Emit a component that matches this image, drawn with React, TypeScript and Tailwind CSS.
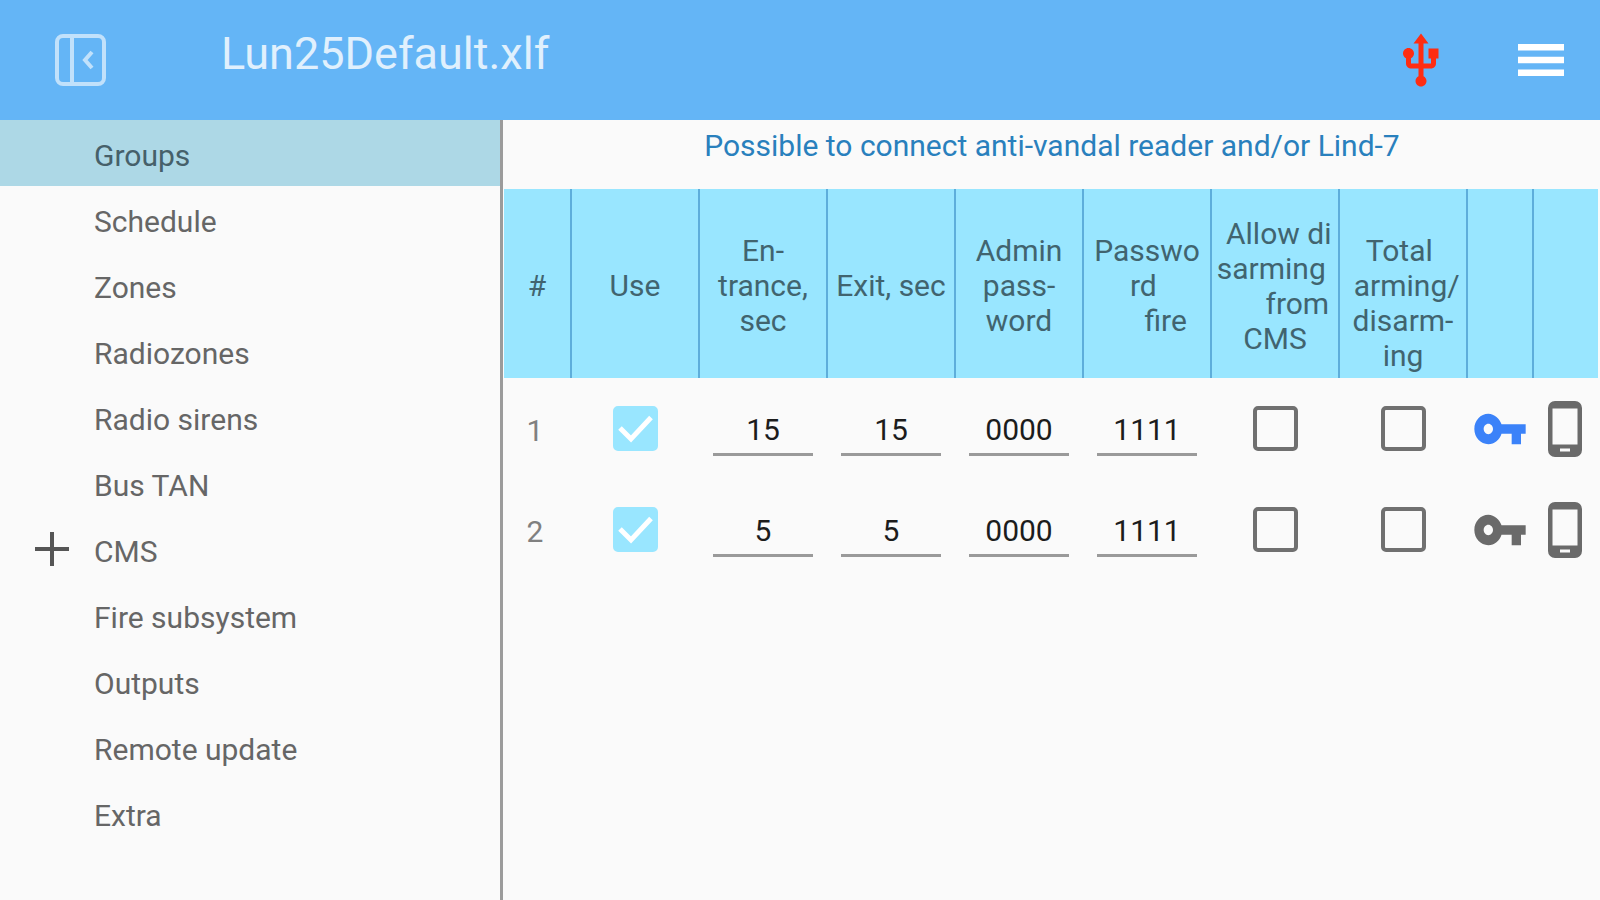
import { useState } from "react";
import type { ReactNode } from "react";

interface Group {
  id: number;
  use: boolean;
  entrance: string;
  exit: string;
  adminPassword: string;
  firePassword: string;
  allowDisarming: boolean;
  totalArming: boolean;
  keyActive: boolean;
}

const MENU = [
  { name: "Groups" },
  { name: "Schedule" },
  { name: "Zones" },
  { name: "Radiozones" },
  { name: "Radio sirens" },
  { name: "Bus TAN" },
  { name: "CMS", expandable: true },
  { name: "Fire subsystem" },
  { name: "Outputs" },
  { name: "Remote update" },
  { name: "Extra" },
];

// Captions keep their own line breaks and padding spaces
const COLUMNS = [
  { key: "num", caption: "#", width: "w-[68px]" },
  { key: "use", caption: "Use", width: "w-32" },
  { key: "entrance", caption: "En-\ntrance,\nsec", width: "w-32" },
  { key: "exit", caption: "Exit, sec", width: "w-32" },
  { key: "admin", caption: "Admin\npass-\nword", width: "w-32" },
  { key: "fire", caption: "Passwo\nrd \n     fire", width: "w-32" },
  { key: "disarm", caption: " Allow di\nsarming \n      from\nCMS", width: "w-32" },
  { key: "total", caption: " \nTotal \n arming/\ndisarm-\ning", width: "w-32" },
  { key: "key", caption: "", width: "w-[66px]" },
  { key: "phone", caption: "", width: "w-16" },
];

const INITIAL_GROUPS: Group[] = [
  { id: 1, use: true, entrance: "15", exit: "15", adminPassword: "0000", firePassword: "1111", allowDisarming: false, totalArming: false, keyActive: true },
  { id: 2, use: true, entrance: "5", exit: "5", adminPassword: "0000", firePassword: "1111", allowDisarming: false, totalArming: false, keyActive: false },
];

function CollapseIcon() {
  return (
    <svg width="51" height="52" viewBox="0 0 51 52" fill="none" stroke="currentColor" strokeWidth="4">
      <rect x="2" y="2" width="47" height="48" rx="6" />
      <path d="M17 2v48" />
      <path d="M37 18l-7 8 7 8" />
    </svg>
  );
}

function UsbIcon() {
  return (
    <svg width="60" height="60" viewBox="0 0 24 24" fill="currentColor">
      <path d="M15 7v4h1v2h-3V5h2l-3-4-3 4h2v8H8v-2.07c.7-.37 1.2-1.08 1.2-1.93 0-1.21-.99-2.2-2.2-2.2-1.21 0-2.2.99-2.2 2.2 0 .85.5 1.56 1.2 1.93V13c0 1.11.89 2 2 2h3v3.05c-.71.37-1.2 1.1-1.2 1.95 0 1.22.99 2.2 2.2 2.2 1.21 0 2.2-.98 2.2-2.2 0-.85-.49-1.58-1.2-1.95V15h3c1.11 0 2-.89 2-2v-2h1V7h-4z" />
    </svg>
  );
}

function MenuIcon() {
  return (
    <svg width="46" height="32" viewBox="0 0 46 32" fill="currentColor">
      <path d="M0 0h46v6.500H0zM0 12.750h46v6.500H0zM0 25.500h46v6.500H0z" />
    </svg>
  );
}

function KeyIcon() {
  return (
    <svg width="56" height="56" viewBox="0 0 24 24" fill="currentColor" className="shrink-0">
      <path d="M12.650 10C11.830 7.670 9.610 5.500 7 5.500c-3.310 0-6 2.900-6 6.500s2.690 6.500 6 6.500c2.610 0 4.830-1.900 5.650-4.500H17v4.500h4V14h2v-4H12.650zM7 14.200c-1.100 0-2-1-2-2.200s.9-2.200 2-2.200 2 1 2 2.200-.9 2.200-2 2.200z" />
    </svg>
  );
}

function PhoneIcon() {
  return (
    <svg width="34" height="56" viewBox="0 0 34 56" fill="currentColor" fillRule="evenodd">
      <path d="M7 0h20a7 7 0 0 1 7 7v42a7 7 0 0 1-7 7H7a7 7 0 0 1-7-7V7a7 7 0 0 1 7-7zM4.500 7.500v36h25v-36zM12 47.500v3h10v-3z" />
    </svg>
  );
}

function CheckBox({ label, checked, onChange }: { label: string; checked: boolean; onChange: (v: boolean) => void }) {
  return (
    <span className="grid place-items-center">
      <input
        type="checkbox"
        aria-label={label}
        checked={checked}
        onChange={(e) => onChange(e.target.checked)}
        className="peer col-start-1 row-start-1 size-[45px] appearance-none rounded-[5px] border-4 border-[#707070] checked:border-[#99e6ff] checked:bg-[#99e6ff]"
      />
      <svg
        width="45"
        height="45"
        viewBox="0 0 45 45"
        fill="none"
        stroke="#fff"
        strokeWidth="5"
        className="pointer-events-none invisible col-start-1 row-start-1 peer-checked:visible"
      >
        <path d="M7 22l11 11L38 11.500" />
      </svg>
    </span>
  );
}

function Field({ label, value, onChange }: { label: string; value: string; onChange: (v: string) => void }) {
  return (
    <input
      type="text"
      aria-label={label}
      value={value}
      onChange={(e) => onChange(e.target.value)}
      className="mx-auto block h-[54px] w-[100px] border-b-[3px] border-[#9a9a9a] bg-transparent pt-1 text-center text-[#1c1c1c] outline-none"
    />
  );
}

function Cell({ children }: { children: ReactNode }) {
  return <td className="h-[101px] p-0 pr-0.5 text-center align-middle">{children}</td>;
}

export default function App() {
  const [active, setActive] = useState("Groups");
  const [sidebarOpen, setSidebarOpen] = useState(true);
  const [groups, setGroups] = useState(INITIAL_GROUPS);

  const update = (id: number, patch: Partial<Group>) => {
    setGroups((prev) => prev.map((g) => (g.id === id ? { ...g, ...patch } : g)));
  };

  return (
    <div className="flex min-h-screen flex-col bg-[#fafafa] font-['Roboto',sans-serif] text-[30px] leading-[35px] text-[#666]">
      <header className="flex h-[120px] items-center bg-[#64b5f6] pr-9 pl-[55px]">
        <button aria-label="Toggle sidebar" onClick={() => setSidebarOpen(!sidebarOpen)} className="text-[#c1e1fb]">
          <CollapseIcon />
        </button>
        <h1 className="ml-[115px] flex-1 pb-3 text-[45px] leading-[54px] text-[#e0f0fd]">Lun25Default.xlf</h1>
        <button aria-label="USB connection" className="mr-[67px] pt-0.5 text-[#ff2d12]">
          <UsbIcon />
        </button>
        <button aria-label="Menu" className="text-white">
          <MenuIcon />
        </button>
      </header>

      <div className="flex flex-1">
        {sidebarOpen && (
          <nav className="w-[503px] shrink-0 border-r-3 border-[#9b9b9b]">
            {MENU.map((item) => (
              <a
                key={item.name}
                href="#"
                onClick={() => setActive(item.name)}
                className={`flex h-[66px] items-center ${active === item.name ? "bg-[#add8e6] text-[#46606a]" : ""}`}
              >
                <span className="flex w-[94px] justify-end pr-6">
                  {item.expandable && (
                    <svg width="36" height="36" viewBox="0 0 36 36" stroke="#555" strokeWidth="4">
                      <path d="M18 1v34M1 18h34" />
                    </svg>
                  )}
                </span>
                <span className="pt-1">{item.name}</span>
              </a>
            ))}
          </nav>
        )}

        <main className="min-w-0 flex-1 pl-px">
          <p className="h-[69px] pt-2 text-center text-[#2980bd]">Possible to connect anti-vandal reader and/or Lind-7</p>
          <table className="table-fixed border-separate border-spacing-0">
            <thead>
              <tr className="h-[189px] bg-[#99e6ff] text-[#41646f]">
                {COLUMNS.map((col) => (
                  <th
                    key={col.key}
                    className={`${col.width} border-r-2 border-[#5eaedb] p-0 pt-1 text-center align-middle font-normal whitespace-pre last:border-r-0`}
                  >
                    {col.caption}
                  </th>
                ))}
              </tr>
            </thead>
            <tbody>
              {groups.map((g) => (
                <tr key={g.id}>
                  <Cell>
                    <span className="block pt-1 pr-1 text-[#808080]">{g.id}</span>
                  </Cell>
                  <Cell>
                    <CheckBox label={`Use group ${g.id}`} checked={g.use} onChange={(v) => update(g.id, { use: v })} />
                  </Cell>
                  <Cell>
                    <Field label={`Entrance, group ${g.id}`} value={g.entrance} onChange={(v) => update(g.id, { entrance: v })} />
                  </Cell>
                  <Cell>
                    <Field label={`Exit, group ${g.id}`} value={g.exit} onChange={(v) => update(g.id, { exit: v })} />
                  </Cell>
                  <Cell>
                    <Field label={`Admin password, group ${g.id}`} value={g.adminPassword} onChange={(v) => update(g.id, { adminPassword: v })} />
                  </Cell>
                  <Cell>
                    <Field label={`Fire password, group ${g.id}`} value={g.firePassword} onChange={(v) => update(g.id, { firePassword: v })} />
                  </Cell>
                  <Cell>
                    <CheckBox label={`Allow disarming from CMS, group ${g.id}`} checked={g.allowDisarming} onChange={(v) => update(g.id, { allowDisarming: v })} />
                  </Cell>
                  <Cell>
                    <CheckBox label={`Total arming, group ${g.id}`} checked={g.totalArming} onChange={(v) => update(g.id, { totalArming: v })} />
                  </Cell>
                  <Cell>
                    <button
                      aria-label={`Keys, group ${g.id}`}
                      onClick={() => update(g.id, { keyActive: !g.keyActive })}
                      className={`mx-auto block ${g.keyActive ? "text-[#3b82f9]" : "text-[#6a6a6a]"}`}
                    >
                      <KeyIcon />
                    </button>
                  </Cell>
                  <Cell>
                    <button aria-label={`Phones, group ${g.id}`} className="mx-auto block text-[#6a6a6a]">
                      <PhoneIcon />
                    </button>
                  </Cell>
                </tr>
              ))}
            </tbody>
          </table>
        </main>
      </div>
    </div>
  );
}
